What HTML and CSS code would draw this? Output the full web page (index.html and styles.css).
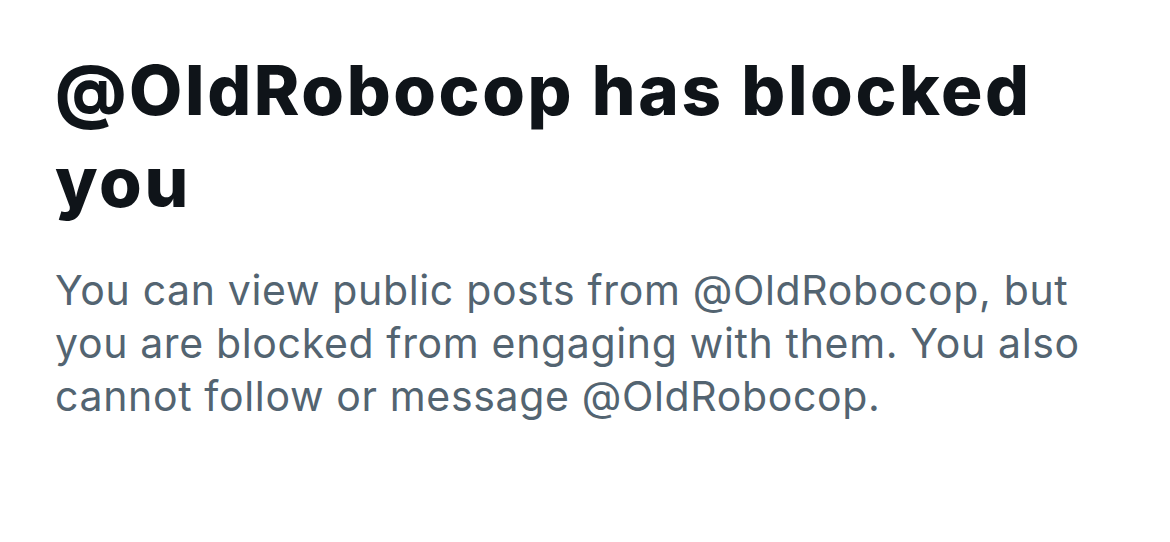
FILE: index.html
```html
<!DOCTYPE html>
<html>
<head>
<link rel="stylesheet" href="styles.css">
</head>
<body>
    <div class="blocked">
        <h1 class="blocked-title">@OldRobocop has blocked you</h1>
        <p class="blocked-text">You can view public posts from @OldRobocop, but you are blocked from engaging with them. You also cannot follow or message @OldRobocop.</p>
    </div>
</body>
</html>
```
FILE: styles.css
```css
body {
    margin: 0;
    background: #ffffff;
    font-family: Inter, "Noto Sans", sans-serif;
}
.blocked {
    padding: 44px 0 0 55px;
    width: 1060px;
}
.blocked-title {
    margin: 0;
    font-size: 69px;
    font-weight: 800;
    line-height: 92px;
    color: #0f1419;
    letter-spacing: 2.6px;
}
.blocked-text {
    margin: 36px 0 0;
    font-size: 41px;
    font-weight: 400;
    line-height: 53px;
    color: #536471;
    letter-spacing: 0.65px;
}
```
